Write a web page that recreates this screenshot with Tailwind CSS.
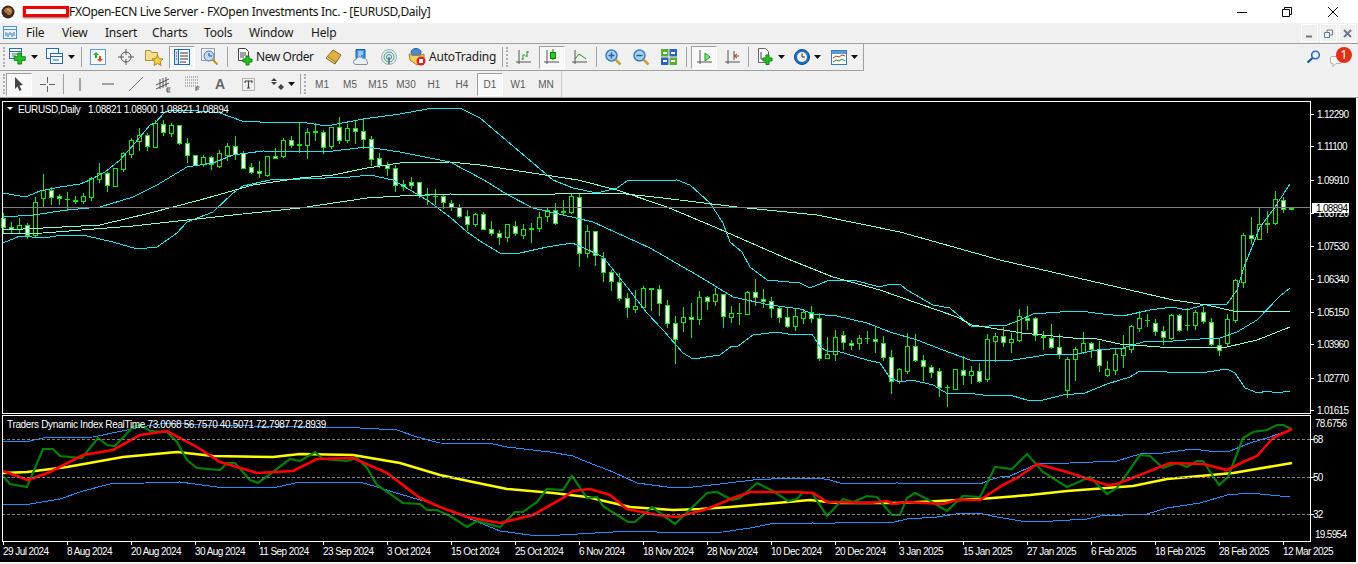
<!DOCTYPE html>
<html lang="en">

<head>
    <meta charset="UTF-8" />
    <title>FXOpen-ECN Live Server - EURUSD,Daily</title>
    <script src="https://cdn.jsdelivr.net/npm/@tailwindcss/browser@4"></script>
</head>

<body class="bg-white w-[1358px] h-[564px] overflow-hidden font-['Noto_Sans',sans-serif] text-black">
    <!-- Title bar -->
    <div class="h-[23px] flex items-center bg-white">
        <svg class="ml-[1px] w-[14px] h-[14px]" viewBox="0 0 14 14">
            <circle cx="7" cy="7" r="6.5" fill="#3a2a20" />
            <path d="M3 5c2-3 6-3 8-1 1 2 0 5-2 6-2 1-3-1-4-2S3 7 3 5z" fill="#b0703a" />
            <path d="M6 4c1 0 3 1 3 3" fill="none" stroke="#e8c8a0" />
        </svg>
        <div class="ml-[8px] w-[46px] h-[11px] bg-white border-[3px] border-[#f00000] shadow-[0_1px_2px_#805050]"></div>
        <span class="text-[12px] leading-none tracking-[-0.32px] text-[#111]">FXOpen-ECN Live Server - FXOpen Investments Inc. - [EURUSD,Daily]</span>
        <div class="ml-auto flex items-center pr-[20px]">
            <svg class="w-[10px] h-[10px] mr-[35px]" viewBox="0 0 10 10"><path d="M0 5.5h10" stroke="#000" /></svg>
            <svg class="w-[10px] h-[10px] mr-[36px]" viewBox="0 0 10 10"><path d="M.5 2.5h7v7h-7zM2.5 2.5v-2h7v7h-2" fill="none" stroke="#000" /></svg>
            <svg class="w-[10px] h-[10px]" viewBox="0 0 10 10"><path d="M0 0l10 10M10 0L0 10" stroke="#000" /></svg>
        </div>
    </div>

    <!-- Menu -->
    <div class="h-[21px] bg-[#f0f0f0] border-b border-[#a0a0a0] flex items-center text-[12px] tracking-[-0.2px] text-[#1a1a1a]">
        <svg class="ml-[3px] w-[15px] h-[14px]" viewBox="0 0 15 14">
            <rect x=".5" y=".5" width="13" height="12" fill="#eaf4ff" stroke="#4a90d9" />
            <path d="M.5 3.5h13" stroke="#4a90d9" />
            <path d="M3 10V6M5 11V7M7 9V6M9 11V7M11 10V6" stroke="#3a70b0" />
        </svg>
        <span class="ml-[8px] w-[36px]">File</span>
        <span class="w-[43px]">View</span>
        <span class="w-[47px]">Insert</span>
        <span class="w-[52px]">Charts</span>
        <span class="w-[45px]">Tools</span>
        <span class="w-[62px]">Window</span>
        <span>Help</span>
        <div class="ml-auto flex gap-[2px] pr-[2px]">
            <div class="w-[17px] h-[18px] border border-white flex items-center justify-center">
                <svg class="w-[9px] h-[9px]" viewBox="0 0 9 9"><path d="M1 7.5h6" stroke="#6a7a8a" stroke-width="2" /></svg>
            </div>
            <div class="w-[17px] h-[18px] border border-white flex items-center justify-center">
                <svg class="w-[9px] h-[9px]" viewBox="0 0 9 9"><path d="M.5 3.5h5v5h-5zM3 3V1h5.500v5H6" fill="none" stroke="#6a7a8a" /></svg>
            </div>
            <div class="w-[17px] h-[18px] border border-white flex items-center justify-center">
                <svg class="w-[9px] h-[9px]" viewBox="0 0 9 9"><path d="M1 1l7 7M8 1L1 8" stroke="#6a7a8a" stroke-width="2" /></svg>
            </div>
        </div>
    </div>

    <!-- Standard toolbar -->
    <div class="h-[27px] bg-[#f0f0f0] flex">
        <div class="w-[864px] h-[27px] border-r border-b border-[#a0a0a0] flex items-center pl-[3px]">
            <div class="w-[2px] h-[20px] border-l-2 border-dotted border-[#b0b0b0]"></div>
            <!-- new chart -->
            <div class="ml-[3px] w-[37px] flex items-center pl-[1px]">
                <svg class="w-[18px] h-[18px]" viewBox="0 0 18 18">
                    <rect x=".5" y=".5" width="12" height="10" fill="#fff" stroke="#2a6ab0" />
                    <path d="M.5 3.500h12M3 6h6M3 8h4" stroke="#2a6ab0" />
                    <path d="M8 6h4v4h4v4h-4v4H8v-4H4v-4h4z" fill="#22c422" stroke="#0c800c" transform="translate(1.500 -.5) scale(.92)" />
                </svg>
                <svg class="ml-[4px] w-[7px] h-[4px]" viewBox="0 0 7 4"><path d="M0 0h7L3.500 4z" fill="#111" /></svg>
            </div>
            <!-- profiles -->
            <div class="w-[36px] flex items-center pl-[1px]">
                <svg class="w-[18px] h-[18px]" viewBox="0 0 18 18">
                    <rect x=".5" y=".5" width="12" height="10" fill="#f6fbff" stroke="#2a6ab0" />
                    <rect x="4.500" y="5.500" width="12" height="10" fill="#f6fbff" stroke="#2a6ab0" />
                    <path d="M4.500 8.500h12M7 12h6" stroke="#2a6ab0" />
                </svg>
                <svg class="ml-[4px] w-[7px] h-[4px]" viewBox="0 0 7 4"><path d="M0 0h7L3.500 4z" fill="#111" /></svg>
            </div>
            <div class="w-px h-[20px] bg-[#a0a0a0]"></div>
            <div class="ml-[2px] w-[28px] flex justify-center">
                <svg class="w-[16px] h-[16px]" viewBox="0 0 16 16">
                    <rect x=".5" y=".5" width="15" height="15" fill="#fff" stroke="#5aa0d8" />
                    <path d="M6 3l3 3H7v3H5V6H3z" fill="#22b022" />
                    <path d="M10 13l-3-3h2V7h2v3h2z" fill="#e04a20" />
                </svg>
            </div>
            <div class="w-[28px] flex justify-center">
                <svg class="w-[16px] h-[16px]" viewBox="0 0 16 16">
                    <circle cx="8" cy="8" r="5" fill="none" stroke="#555" />
                    <path d="M8 0v6M8 10v6M0 8h6M10 8h6" stroke="#555" />
                </svg>
            </div>
            <div class="w-[28px] flex justify-center">
                <svg class="w-[18px] h-[18px]" viewBox="0 0 18 18">
                    <path d="M.5 2.500h5l1 2h6v8H.5z" fill="#f4e08a" stroke="#a89040" />
                    <path d="M12.500 7l1.700 3.600 3.800.4-2.800 2.600.8 3.900-3.500-2-3.500 2 .8-3.900L7 11l3.800-.4z" fill="#f6d040" stroke="#a88820" />
                </svg>
            </div>
            <div class="w-[28px] flex justify-center">
                <div class="w-[26px] h-[23px] bg-[#f8f8f8] border border-[#a0a0a0] border-r-white border-b-white flex items-center justify-center">
                    <svg class="w-[16px] h-[16px]" viewBox="0 0 16 16">
                        <rect x=".5" y=".5" width="15" height="15" fill="#fff" stroke="#1a6ac8" />
                        <rect x=".5" y=".5" width="4" height="15" fill="#cfe4fa" stroke="#1a6ac8" />
                        <path d="M6 4h8M6 7h8M6 10h8M6 13h6M2 4h1M2 7h1M2 10h1" stroke="#333" />
                    </svg>
                </div>
            </div>
            <div class="w-[28px] flex justify-center">
                <svg class="w-[18px] h-[18px]" viewBox="0 0 18 18">
                    <rect x=".5" y=".5" width="13" height="12" fill="#eef2f8" stroke="#90a0b8" />
                    <circle cx="8" cy="8" r="5" fill="#c0daf2" stroke="#5a7aa0" />
                    <path d="M8 5v3h3" stroke="#1a4a90" fill="none" />
                    <path d="M11.500 11.500l5 5" stroke="#c09020" stroke-width="2" />
                </svg>
            </div>
            <div class="ml-[3px] w-px h-[20px] bg-[#a0a0a0]"></div>
            <!-- new order -->
            <div class="ml-[4px] w-[86px] flex items-center pl-[5px]">
                <svg class="w-[18px] h-[18px] shrink-0" viewBox="0 0 18 18">
                    <path d="M1.500.5h7l3 3v9h-10z" fill="#fff" stroke="#444" />
                    <path d="M3 5h6M3 7h6M3 9h4" stroke="#444" />
                    <path d="M9 8h3v3h3v3h-3v3H9v-3H6v-3h3z" fill="#22c422" stroke="#0c800c" />
                </svg>
                <span class="ml-[1px] text-[12px] tracking-[-0.42px] whitespace-nowrap text-[#222]">New Order</span>
            </div>
            <div class="ml-[1px] w-[28px] flex justify-center">
                <svg class="w-[17px] h-[16px]" viewBox="0 0 17 16">
                    <path d="M1 9l7-8 8 5-6 9z" fill="#e0b040" stroke="#8a6a20" />
                    <path d="M1 9l9 6 .5-2L3 8" fill="#f4e0a0" stroke="#8a6a20" />
                </svg>
            </div>
            <div class="w-[28px] flex justify-center">
                <svg class="w-[17px] h-[17px]" viewBox="0 0 17 17">
                    <path d="M3 .5h9v9H3z" fill="#3a90e0" stroke="#1a60b0" />
                    <path d="M5 3h5M5 5h5M5 7h3" stroke="#fff" />
                    <path d="M3 15.500a2.500 2.500 0 0 1 0-5 4 4 0 0 1 7-1 3 3 0 0 1 4 3 2 2 0 0 1 0 3z" fill="#e8eef4" stroke="#8090a0" />
                </svg>
            </div>
            <div class="w-[28px] flex justify-center">
                <svg class="w-[16px] h-[16px]" viewBox="0 0 16 16">
                    <circle cx="8" cy="8" r="7.500" fill="#e4eef0" stroke="#90b0c0" />
                    <circle cx="8" cy="8" r="5" fill="none" stroke="#60a060" />
                    <circle cx="8" cy="8" r="2.500" fill="none" stroke="#4080c0" />
                    <path d="M8 8v7" stroke="#507080" stroke-width="1.500" />
                </svg>
            </div>
            <!-- autotrading -->
            <div class="w-[98px] flex items-center pl-[5px]">
                <svg class="w-[18px] h-[18px] shrink-0" viewBox="0 0 18 18">
                    <ellipse cx="8" cy="4.500" rx="5" ry="4" fill="#4a8ad0" stroke="#2a5a90" />
                    <path d="M1 6c3 2 11 2 15 0v6l-7 5-7-5z" fill="#f0d060" stroke="#a08030" />
                    <circle cx="13" cy="13" r="4.500" fill="#e02020" />
                    <rect x="11" y="11" width="4" height="4" fill="#fff" />
                </svg>
                <span class="ml-[3px] text-[12px] tracking-[-0.2px] whitespace-nowrap text-[#222]">AutoTrading</span>
            </div>
            <div class="ml-[1px] w-px h-[20px] bg-[#a0a0a0]"></div>
            <div class="ml-[3px] w-[2px] h-[20px] border-l-2 border-dotted border-[#b0b0b0]"></div>
            <!-- chart style -->
            <div class="ml-[2px] w-[28px] flex justify-center">
                <svg class="w-[16px] h-[16px]" viewBox="0 0 16 16">
                    <path d="M3 1v14M0 13h15" stroke="#555" fill="none" />
                    <path d="M7 11V6h0M7 10H5.500M7 6h2M11 8V2M11 3h2M11 7H9.500" stroke="#1a9a1a" fill="none" />
                </svg>
            </div>
            <div class="w-[28px] flex justify-center">
                <div class="w-[26px] h-[23px] bg-[#f8f8f8] border border-[#a0a0a0] border-r-white border-b-white flex items-center justify-center">
                    <svg class="w-[16px] h-[16px]" viewBox="0 0 16 16">
                        <path d="M3 1v14M0 13h15" stroke="#555" fill="none" />
                        <path d="M9 0v11" stroke="#0c800c" />
                        <rect x="6.500" y="3.500" width="5" height="6" fill="#22d022" stroke="#0c800c" />
                    </svg>
                </div>
            </div>
            <div class="w-[28px] flex justify-center">
                <svg class="w-[16px] h-[16px]" viewBox="0 0 16 16">
                    <path d="M3 1v14M0 13h15" stroke="#555" fill="none" />
                    <path d="M3 10l4-5 3 2 4 3" stroke="#1a9a1a" fill="none" />
                </svg>
            </div>
            <div class="ml-[2px] w-px h-[20px] bg-[#a0a0a0]"></div>
            <!-- zoom and tile -->
            <div class="ml-[2px] w-[28px] flex justify-center">
                <svg class="w-[17px] h-[17px]" viewBox="0 0 17 17">
                    <circle cx="6.500" cy="6.500" r="5.500" fill="#a8d0f0" stroke="#3a80c0" stroke-width="1.500" />
                    <path d="M3.500 6.500h6M6.500 3.500v6" stroke="#2a60a0" stroke-width="1.500" />
                    <path d="M10.500 10.500l5 5" stroke="#c8a030" stroke-width="2.500" />
                </svg>
            </div>
            <div class="w-[28px] flex justify-center">
                <svg class="w-[17px] h-[17px]" viewBox="0 0 17 17">
                    <circle cx="6.500" cy="6.500" r="5.500" fill="#a8d0f0" stroke="#3a80c0" stroke-width="1.500" />
                    <path d="M3.500 6.500h6" stroke="#2a60a0" stroke-width="1.500" />
                    <path d="M10.500 10.500l5 5" stroke="#c8a030" stroke-width="2.500" />
                </svg>
            </div>
            <div class="w-[28px] flex justify-center">
                <svg class="w-[16px] h-[16px]" viewBox="0 0 16 16">
                    <rect width="7.500" height="7.500" fill="#58b030" />
                    <rect x="8.500" width="7.500" height="7.500" fill="#2a60c8" />
                    <rect y="8.500" width="7.500" height="7.500" fill="#2a60c8" />
                    <rect x="8.500" y="8.500" width="7.500" height="7.500" fill="#58b030" />
                    <path d="M2 4h4M10 4h4M2 12h4M10 12h4" stroke="#fff" stroke-width="2" />
                </svg>
            </div>
            <div class="ml-[3px] w-px h-[20px] bg-[#a0a0a0]"></div>
            <!-- autoscroll and shift -->
            <div class="ml-[3px] w-[28px] flex justify-center">
                <div class="w-[26px] h-[23px] bg-[#f8f8f8] border border-[#a0a0a0] border-r-white border-b-white flex items-center justify-center">
                    <svg class="w-[15px] h-[16px]" viewBox="0 0 15 16">
                        <path d="M3 1v14M0 13h15" stroke="#555" fill="none" />
                        <path d="M8 4l5 4-5 4z" fill="#8ae08a" stroke="#1a9a1a" />
                    </svg>
                </div>
            </div>
            <div class="w-[28px] flex justify-center">
                <svg class="w-[15px] h-[16px]" viewBox="0 0 15 16">
                    <path d="M3 1v14M0 13h15M9 2v9" stroke="#555" fill="none" />
                    <path d="M14 7H9M12 5l-3 2 3 2" stroke="#b03010" fill="none" />
                </svg>
            </div>
            <div class="ml-[2px] w-px h-[20px] bg-[#a0a0a0]"></div>
            <!-- indicators, periods, templates -->
            <div class="ml-[8px] w-[37px] flex items-center">
                <svg class="w-[18px] h-[18px]" viewBox="0 0 18 18">
                    <path d="M1.500.5h7l3 3v11h-10z" fill="#f8f8f8" stroke="#666" />
                    <path d="M4 4v7h3" stroke="#444" fill="none" />
                    <path d="M9 7h3v3h3v3h-3v3.500H9V13H6v-3h3z" fill="#22c422" stroke="#0c800c" />
                </svg>
                <svg class="ml-[3px] w-[7px] h-[4px]" viewBox="0 0 7 4"><path d="M0 0h7L3.500 4z" fill="#111" /></svg>
            </div>
            <div class="w-[37px] flex items-center">
                <svg class="w-[16px] h-[16px]" viewBox="0 0 16 16">
                    <circle cx="8" cy="8" r="7.500" fill="#1a70c8" stroke="#0a4a90" />
                    <circle cx="8" cy="8" r="5" fill="#f2f2e4" />
                    <path d="M8 4.500V8h3" stroke="#333" fill="none" />
                </svg>
                <svg class="ml-[4px] w-[7px] h-[4px]" viewBox="0 0 7 4"><path d="M0 0h7L3.500 4z" fill="#111" /></svg>
            </div>
            <div class="w-[32px] flex items-center">
                <svg class="w-[16px] h-[15px]" viewBox="0 0 16 15">
                    <rect x=".5" y=".5" width="15" height="14" fill="#fff" stroke="#3a7ab8" />
                    <rect x="1" y="1" width="14" height="3" fill="#5a9ad8" />
                    <path d="M2 8l3-2 3 1 3-2 3 1" stroke="#b04020" fill="none" />
                    <path d="M2 12l3-2 3 1 3-2 3 2" stroke="#209020" fill="none" />
                </svg>
                <svg class="ml-[4px] w-[7px] h-[4px]" viewBox="0 0 7 4"><path d="M0 0h7L3.500 4z" fill="#111" /></svg>
            </div>
        </div>
        <div class="ml-auto flex items-center pr-[16px] pb-[2px]">
            <svg class="w-[15px] h-[14px] mr-[9px]" viewBox="0 0 15 14">
                <circle cx="9.500" cy="5" r="3.800" fill="none" stroke="#2a6ac8" stroke-width="1.600" />
                <path d="M6.500 8L1.500 12.500" stroke="#1a50b0" stroke-width="2.200" />
            </svg>
            <div class="relative w-[12px] h-[14px] mt-[10px]">
                <svg class="w-[13px] h-[13px]" viewBox="0 0 13 13">
                    <path d="M1.500 1.500h9a1 1 0 0 1 1 1v5a1 1 0 0 1-1 1H6l-3 3V8.500H1.500a1 1 0 0 1-1-1v-5a1 1 0 0 1 1-1z" fill="#f4f4f4" stroke="#b0b0b0" />
                </svg>
                <div class="absolute left-[6px] top-[-8px] w-[16px] h-[16px] rounded-full bg-[#e03018] text-white text-[12px] leading-[16px] text-center">1</div>
            </div>
        </div>
    </div>

    <!-- Line studies and periods toolbar -->
    <div class="h-[27px] bg-[#f0f0f0] border-b border-[#a0a0a0] flex items-center pl-[3px] text-[10px] text-[#5a5a5a] font-['Liberation_Sans',sans-serif]">
        <div class="w-[2px] h-[20px] border-l-2 border-dotted border-[#b0b0b0]"></div>
        <div class="w-[28px] flex justify-center">
            <div class="w-[26px] h-[23px] bg-[#f8f8f8] border border-[#a0a0a0] border-r-white border-b-white flex items-center justify-center">
                <svg class="w-[12px] h-[16px]" viewBox="0 0 12 16"><path d="M2 1l8 8-3.500.5 2 4.500-2 1-2-4.500L2 13z" fill="#444" /></svg>
            </div>
        </div>
        <div class="w-[28px] flex justify-center">
            <svg class="w-[15px] h-[15px]" viewBox="0 0 15 15"><path d="M7.500 0v6M7.500 9v6M0 7.500h6M9 7.500h6" stroke="#666" /></svg>
        </div>
        <div class="ml-[2px] w-px h-[20px] bg-[#a0a0a0]"></div>
        <div class="ml-[2px] w-[28px] flex justify-center">
            <svg class="w-[2px] h-[13px]" viewBox="0 0 2 13"><path d="M1 0v13" stroke="#555" /></svg>
        </div>
        <div class="w-[28px] flex justify-center">
            <svg class="w-[12px] h-[2px]" viewBox="0 0 12 2"><path d="M0 1h12" stroke="#555" /></svg>
        </div>
        <div class="w-[28px] flex justify-center">
            <svg class="w-[14px] h-[14px]" viewBox="0 0 14 14"><path d="M0 14L14 0" stroke="#777" /></svg>
        </div>
        <div class="w-[28px] flex justify-center">
            <svg class="w-[16px] h-[17px]" viewBox="0 0 16 17">
                <path d="M0 9l13-6M0 13l13-6M4 3v10M7 2v10M10 1v10" stroke="#555" fill="none" />
                <path d="M11 16v-4h3.500M11 14h3M11 16h3.500" stroke="#555" fill="none" />
            </svg>
        </div>
        <div class="w-[28px] flex justify-center">
            <svg class="w-[15px] h-[16px]" viewBox="0 0 15 16">
                <path d="M0 1h13M0 4h13M0 7h13M0 10h13" stroke="#777" stroke-dasharray="1 1" />
                <path d="M11 15v-4h3.500M11 13h3" stroke="#555" fill="none" />
            </svg>
        </div>
        <div class="w-[28px] flex justify-center text-[14px] font-bold text-[#666]">A</div>
        <div class="w-[28px] flex justify-center">
            <svg class="w-[13px] h-[13px]" viewBox="0 0 13 13">
                <rect x=".5" y=".5" width="12" height="12" fill="none" stroke="#777" stroke-dasharray="1 1" />
                <path d="M3 3h7v2M3 3v2M6.500 3v7M5 10h3" stroke="#444" fill="none" stroke-width="1.200" />
            </svg>
        </div>
        <div class="w-[36px] flex items-center pl-[8px]">
            <svg class="w-[15px] h-[13px]" viewBox="0 0 15 13"><path d="M4 0l3 3H1zM1 4h6L4 7zM11 6l3 3-3 3-3-3z" fill="#444" /></svg>
            <svg class="ml-[3px] w-[7px] h-[4px]" viewBox="0 0 7 4"><path d="M0 0h7L3.500 4z" fill="#111" /></svg>
        </div>
        <div class="ml-[2px] w-px h-[20px] bg-[#a0a0a0]"></div>
        <div class="ml-[3px] w-[2px] h-[20px] border-l-2 border-dotted border-[#b0b0b0]"></div>
        <div class="ml-[2px] w-[28px] text-center">M1</div>
        <div class="w-[28px] text-center">M5</div>
        <div class="w-[28px] text-center">M15</div>
        <div class="w-[28px] text-center">M30</div>
        <div class="w-[28px] text-center">H1</div>
        <div class="w-[28px] text-center">H4</div>
        <div class="w-[28px] flex justify-center">
            <div class="w-[26px] h-[23px] bg-[#f8f8f8] border border-[#a0a0a0] border-r-white border-b-white flex items-center justify-center">D1</div>
        </div>
        <div class="w-[28px] text-center">W1</div>
        <div class="w-[28px] text-center">MN</div>
        <div class="ml-[1px] w-px h-[26px] bg-[#c8c8c8]"></div>
    </div>

    <!-- Chart window -->
    <div class="h-[466px] bg-[#f0f0f0]">
        <svg id="chart" class="block bg-black" width="1356" height="464" viewBox="0 98 1356 464" font-family="'Liberation Sans',sans-serif" font-size="10" fill="#fff">
            <g id="candles" shape-rendering="crispEdges"></g>
            <g id="lines" fill="none"></g>
            <g shape-rendering="crispEdges">
                <path d="M2 207.500h1308" stroke="#808080" />
                <path d="M2 439.500h1308M2 477.500h1308M2 514.500h1308" stroke="#808080" stroke-dasharray="3 2" />
                <path d="M2.500 413V101.500H1310.500V413.500H2.500ZM2.500 541V415.500H1310.500V541.500H2.500Z" stroke="#fff" fill="none" />
                <path d="M1311 114.500h3M1311 146.500h3M1311 180.500h3M1311 213.500h3M1311 246.500h3M1311 279.500h3M1311 312.500h3M1311 344.500h3M1311 378.500h3M1311 410.500h3M1311 439.500h3M1311 477.500h3M1311 514.500h3" stroke="#fff" />
            </g>
            <g id="ticks" shape-rendering="crispEdges" stroke="#fff"></g>
            <path d="M7 107h6l-3 3z" fill="#fff" />
            <text x="18" y="113" letter-spacing="-.4">EURUSD,Daily</text>
            <text x="88" y="113" letter-spacing="-.4">1.08821 1.08900 1.08821 1.08894</text>
            <text x="7" y="428" letter-spacing="-.34">Traders Dynamic Index RealTime 73.0068 56.7570 40.5071 72.7987 72.8939</text>
            <g letter-spacing="-.7">
                <text x="1317" y="118">1.12290</text>
                <text x="1317" y="150">1.11100</text>
                <text x="1317" y="184">1.09910</text>
                <text x="1317" y="217">1.08720</text>
                <text x="1317" y="250">1.07530</text>
                <text x="1317" y="283">1.06340</text>
                <text x="1317" y="316">1.05150</text>
                <text x="1317" y="348">1.03960</text>
                <text x="1317" y="382">1.02770</text>
                <text x="1317" y="414">1.01615</text>
                <text x="1315" y="427">78.6756</text>
                <text x="1313" y="443">68</text>
                <text x="1313" y="481">50</text>
                <text x="1313" y="518">32</text>
                <text x="1315" y="538">19.5954</text>
            </g>
            <rect x="1312" y="203" width="37" height="10" fill="#fff" />
            <text x="1316" y="212" fill="#000" letter-spacing="-.7">1.08894</text>
            <g id="dates" letter-spacing="-.56"></g>
        </svg>
    </div>

    <script>
        // top, bottom, high, low, 1 = bear (white body)
        var bars = [
            [218,227,213,233,1],[227,229,222,233,1],[225,229,218,233,0],[225,235,223,238,1],[202,235,197,237,0],[190,198,174,207,0],[190,197,187,204,1],[196,198,194,204,1],
            [199,199,192,210,0],[200,201,196,203,1],[196,201,193,203,0],[178,197,177,200,0],[173,179,163,182,0],[173,185,172,191,1],[168,186,168,186,0],[153,169,152,171,0],
            [140,154,138,157,0],[135,141,128,150,0],[135,146,133,150,1],[123,147,120,147,0],[124,132,120,135,1],[125,133,123,136,0],[125,143,125,144,1],[143,155,138,162,1],
            [155,165,155,165,1],[157,164,155,166,0],[157,164,156,169,1],[153,166,150,167,0],[146,155,143,160,0],[146,154,136,159,1],[153,168,151,168,1],[167,172,163,173,1],
            [171,173,161,177,1],[156,175,156,176,0],[156,158,148,158,1],[140,156,138,157,0],[140,145,136,147,1],[144,145,123,152,1],[132,145,128,158,0],[131,132,123,140,1],
            [132,147,130,153,1],[127,146,127,148,0],[127,140,117,143,1],[128,140,124,142,0],[128,131,120,143,1],[131,139,118,148,1],[139,159,136,165,1],[158,165,153,167,1],
            [165,168,162,175,1],[168,185,165,191,1],[184,186,180,190,1],[182,185,177,188,1],[182,195,182,197,1],[194,195,188,204,1],[196,196,189,204,1],[196,202,194,208,1],
            [203,207,200,210,1],[207,216,204,217,1],[216,224,210,230,1],[214,224,213,226,0],[214,229,212,229,1],[229,233,221,235,1],[233,237,230,244,1],[224,237,224,241,0],
            [226,233,221,235,1],[229,235,224,238,0],[228,229,223,242,1],[217,228,212,231,0],[210,216,208,221,0],[210,223,203,224,1],[211,212,200,214,0],[196,212,194,213,0],
            [197,253,194,266,1],[231,253,225,257,0],[231,255,231,265,1],[258,272,252,281,1],[272,281,270,290,1],[282,298,273,300,1],[298,307,293,317,1],[306,309,290,312,0],
            [288,307,286,308,0],[288,289,288,310,1],[289,303,285,315,1],[305,323,300,327,1],[323,339,316,363,1],[317,322,307,331,0],[317,319,303,337,1],[297,319,291,324,0],
            [297,301,296,309,1],[294,301,288,305,0],[294,316,294,327,1],[313,317,306,322,0],[313,313,303,324,0],[292,314,291,314,0],[292,297,279,305,1],[299,301,289,307,1],
            [301,308,297,317,1],[308,317,306,322,1],[317,326,307,327,1],[316,326,309,330,0],[312,318,309,323,0],[312,318,306,322,1],[318,358,313,360,1],[354,358,337,358,0],
            [337,354,330,360,0],[335,342,331,349,1],[343,345,340,349,1],[338,343,335,349,0],[338,338,331,343,0],[339,341,327,352,1],[343,357,336,360,1],[357,381,350,393,1],
            [369,381,368,383,0],[346,371,333,373,0],[346,360,334,361,1],[360,366,355,380,1],[367,372,365,377,1],[371,387,368,396,1],[387,387,385,406,0],[369,389,369,389,0],
            [370,375,356,384,1],[371,375,366,383,0],[371,381,363,382,1],[339,379,334,381,0],[336,341,333,361,0],[336,342,327,346,1],[339,342,333,352,0],[316,340,309,341,0],
            [318,320,306,329,1],[318,335,317,340,1],[336,337,331,349,1],[338,347,324,348,1],[347,354,334,358,1],[359,390,357,397,0],[349,359,347,380,0],[343,352,332,353,0],
            [343,349,342,357,1],[349,365,341,371,1],[369,375,361,376,0],[354,370,348,374,0],[348,355,335,367,0],[326,349,325,352,0],[318,328,311,331,0],[320,320,314,326,0],
            [323,331,319,335,1],[331,337,326,344,1],[315,338,314,339,0],[315,330,314,331,1],[325,325,308,330,1],[312,325,310,329,0],[312,321,307,323,1],[322,344,318,345,1],
            [345,350,339,355,1],[319,343,314,346,0],[280,320,279,322,0],[235,282,233,287,0],[235,238,217,243,1],[224,239,207,239,0],[223,224,211,232,1],[199,223,191,224,0],
            [200,209,197,212,1],[208,209,208,209,0]
        ];
        var h = '';
        bars.forEach(function (b, i) {
            var x = 3 + 8 * i;
            h += '<rect x="' + x + '" y="' + b[2] + '" width="1" height="' + (b[3] - b[2] + 1) + '" fill="#14e614"/>';
            h += '<rect x="' + (x - 2) + '" y="' + b[0] + '" width="5" height="' + (b[1] - b[0] + 1) + '" fill="#14e614"/>';
            if (b[1] - b[0] > 1) {
                h += '<rect x="' + (x - 1) + '" y="' + (b[0] + 1) + '" width="3" height="' + (b[1] - b[0] - 1) + '" fill="' + (b[4] ? '#fff' : '#000') + '"/>';
            }
        });
        document.getElementById('candles').innerHTML = h;

        var bbColor = '#1fe6ee', maColor = '#7fffd4';
        var series = [
            // bollinger upper
            [bbColor, 1, '3,193 20,196 28,196 40,191 60,187 80,184 90,180 105,172 120,160 135,143 150,125 155,123 165,112 172,110 187,110 220,113 242,121 277,123 300,122 327,126 363,119 400,114 433,108 460,108 480,118 500,135 520,152 553,180 573,188 597,193 617,188 627,181 677,180 690,185 710,203 723,223 730,242 742,252 750,267 767,280 800,283 810,288 827,281 853,280 880,287 890,284 900,284 907,290 933,305 950,308 972,327 1007,325 1020,320 1033,314 1060,312 1080,311 1103,314 1123,316 1150,310 1172,307 1187,310 1203,305 1227,304 1237,290 1244,267 1260,227 1273,210 1290,184'],
            // bollinger middle
            [bbColor, 1, '3,217 33,215 67,210 100,207 133,197 157,185 187,167 213,163 233,155 263,151 300,152 333,151 367,147 400,152 450,162 484,180 508,195 533,208 563,215 593,222 650,248 697,275 733,297 770,305 800,309 813,314 837,316 867,323 890,332 917,340 943,350 970,360 1013,360 1033,357 1050,354 1077,354 1097,350 1123,348 1143,342 1173,341 1200,339 1220,338 1237,332 1257,320 1280,296 1290,288'],
            // bollinger lower
            [bbColor, 1, '3,243 20,236 43,238 63,235 87,236 113,242 137,249 157,247 177,233 187,222 213,212 233,193 243,186 270,180 300,179 350,177 370,175 393,180 427,200 450,217 467,232 483,243 500,253 520,253 547,247 572,243 582,247 603,257 627,287 647,313 663,330 683,353 693,359 720,355 732,346 738,346 753,335 777,332 793,335 812,334 820,347 827,351 837,351 867,360 880,363 890,378 900,382 912,380 933,385 948,394 967,393 983,395 1013,396 1027,400 1043,400 1063,395 1085,393 1107,384 1130,377 1140,371 1167,372 1207,372 1227,369 1235,373 1245,388 1258,393 1267,391 1277,393 1290,391'],
            // moving averages
            [maColor, 1, '3,230 43,228 100,225 150,213 200,200 253,185 300,178 333,175 367,168 400,163 450,162 480,165 578,180 617,190 667,207 717,228 783,257 833,277 880,290 917,303 957,317 972,325 985,327 1022,333 1073,338 1097,339 1120,344 1160,347 1227,347 1257,340 1290,327'],
            [maColor, 1, '3,234 43,233 133,226 233,215 300,208 367,198 400,196 450,194 543,195 567,193 617,193 663,198 737,207 817,215 900,232 1000,260 1130,290 1173,300 1207,305 1233,311 1290,311'],
            // TDI volatility bands
            ['#1e90ff', 1, '3,441 30,441 43,438 93,437 127,430 140,427 167,423 200,425 360,428 397,430 417,437 440,443 493,444 507,447 550,452 573,456 587,462 613,472 637,483 667,487 693,487 720,484 753,480 790,478 817,478 830,480 843,484 897,483 980,484 990,480 1000,477 1010,476 1037,464 1070,463 1117,461 1140,454 1163,453 1193,449 1217,452 1230,451 1250,443 1267,438 1292,429'],
            ['#1e90ff', 1, '3,505 30,504 60,499 83,491 110,484 180,482 217,487 250,488 277,487 300,482 360,482 377,487 393,492 427,502 440,507 473,520 500,531 530,535 560,535 613,532 640,531 673,533 723,532 750,528 770,524 813,523 827,524 843,522 880,522 890,523 907,519 937,517 963,513 983,514 997,517 1027,522 1053,521 1087,519 1100,516 1147,514 1167,508 1200,503 1227,495 1250,493 1290,497'],
            // signal line
            ['#ffff00', 2.5, '3,473 27,472 67,467 123,457 177,452 213,456 273,457 300,454 353,455 400,463 440,475 473,482 507,489 553,493 587,497 630,507 673,510 700,509 730,507 810,500 837,503 897,503 980,499 1030,495 1067,491 1133,486 1167,479 1233,473 1292,463'],
            // price line
            ['#008000', 2.2, '3,476 10,484 27,487 43,449 53,449 60,456 82,458 98,438 107,445 115,446 133,427 140,425 150,431 167,432 177,442 187,460 197,468 220,470 227,463 235,463 250,480 258,483 290,459 300,461 315,452 323,459 347,461 357,458 367,468 377,485 403,503 420,504 427,510 437,510 450,516 467,527 477,521 500,527 515,512 523,512 537,502 547,489 563,490 572,476 587,498 597,497 603,506 628,522 635,522 652,507 675,524 707,493 717,492 732,500 740,498 757,483 773,491 788,501 797,499 802,493 812,493 827,516 843,499 853,502 867,496 877,497 892,515 900,515 907,498 915,493 927,499 947,511 963,496 980,497 995,467 1012,469 1027,454 1043,472 1067,487 1090,477 1107,494 1117,488 1140,455 1150,456 1163,468 1177,463 1187,467 1197,461 1203,461 1219,485 1228,477 1243,438 1253,432 1267,430 1277,425 1283,425 1292,429'],
            // RSI line
            ['#ff0000', 2.6, '3,471 28,480 50,472 83,455 113,450 140,435 167,431 197,447 220,462 257,473 293,471 317,459 353,458 387,473 420,498 440,507 467,517 500,523 533,515 563,498 573,491 590,489 610,495 627,509 657,515 677,517 707,509 733,498 750,492 797,492 813,493 827,502 870,503 887,501 893,504 907,502 943,504 957,500 980,500 1003,485 1017,478 1037,464 1067,472 1107,485 1117,484 1170,463 1203,464 1227,470 1243,462 1257,456 1273,438 1292,429']
        ];
        document.getElementById('lines').innerHTML = series.map(function (s) {
            return '<polyline points="' + s[2] + '" stroke="' + s[0] + '" stroke-width="' + s[1] + '"' + (s[1] === 1 ? ' shape-rendering="crispEdges"' : '') + '/>';
        }).join('');

        var labels = ['29 Jul 2024', '8 Aug 2024', '20 Aug 2024', '30 Aug 2024', '11 Sep 2024', '23 Sep 2024', '3 Oct 2024', '15 Oct 2024', '25 Oct 2024', '6 Nov 2024', '18 Nov 2024', '28 Nov 2024', '10 Dec 2024', '20 Dec 2024', '3 Jan 2025', '15 Jan 2025', '27 Jan 2025', '6 Feb 2025', '18 Feb 2025', '28 Feb 2025', '12 Mar 2025'];
        var d = '', t = '';
        labels.forEach(function (l, i) {
            var x = 3 + 64 * i;
            d += '<text x="' + x + '" y="555">' + l + '</text>';
            t += '<path d="M' + (x + .5) + ' 542v3"/>';
        });
        document.getElementById('dates').innerHTML = d;
        document.getElementById('ticks').innerHTML = t;
    </script>
</body>

</html>
